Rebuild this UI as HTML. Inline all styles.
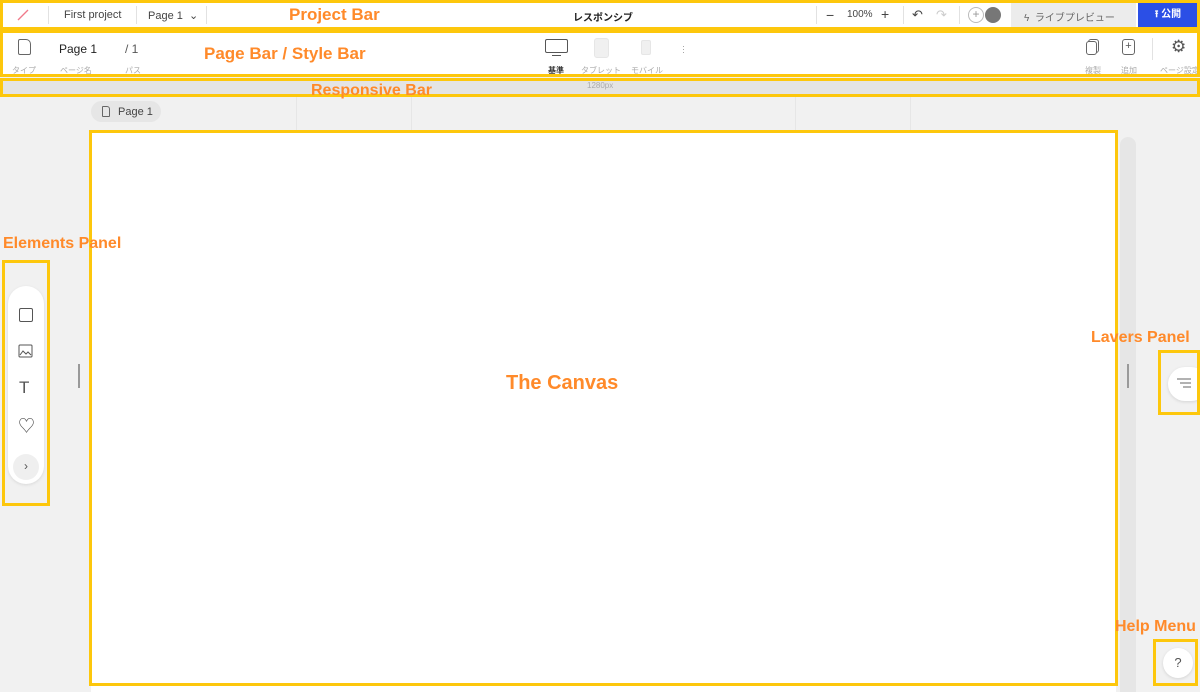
<!DOCTYPE html>
<html><head><meta charset="utf-8"><style>
*{box-sizing:border-box;margin:0;padding:0}
body{width:1200px;height:690px;overflow:hidden;background:#f1f1f1;font-family:"Liberation Sans","Noto Sans CJK JP",sans-serif;position:relative;color:#333}
.a{position:absolute}
.y{position:absolute;border:3px solid #fdc70c}
.lbl{position:absolute;color:#ff8a2a;font-weight:bold;font-size:17px;white-space:nowrap}
.t{font-size:11px;color:#444;white-space:nowrap}
.s{font-size:8px;color:#aaa;white-space:nowrap}
.sep{position:absolute;width:1px;background:#e2e2e2}
</style></head><body>
<!-- project bar -->
<div class="a" style="left:0;top:0;width:1200px;height:30px;background:#fff"></div>
<svg class="a" style="left:16px;top:8px" width="14" height="14"><line x1="2" y1="12" x2="12" y2="2" stroke="#f07a8a" stroke-width="1.3"/></svg>
<div class="sep" style="left:48px;top:6px;height:18px"></div>
<div class="a t" style="left:64px;top:9px">First project</div>
<div class="sep" style="left:136px;top:6px;height:18px"></div>
<div class="a t" style="left:148px;top:9px">Page 1 &nbsp;⌄</div>
<div class="sep" style="left:206px;top:6px;height:18px"></div>
<div class="a t" style="left:573px;top:9px;font-weight:bold;font-size:10px;color:#222">レスポンシブ</div>
<div class="sep" style="left:816px;top:6px;height:18px"></div>
<div class="a t" style="left:826px;top:7px;font-size:14px">−</div>
<div class="a t" style="left:847px;top:9px;font-size:10px">100%</div>
<div class="a t" style="left:881px;top:6px;font-size:14px">+</div>
<div class="sep" style="left:903px;top:6px;height:18px"></div>
<div class="a t" style="left:912px;top:7px;font-size:13px">↶</div>
<div class="a t" style="left:936px;top:7px;font-size:13px;color:#ccc">↷</div>
<div class="sep" style="left:959px;top:6px;height:18px"></div>
<div class="a" style="left:968px;top:7px;width:16px;height:16px;border:1px solid #bbb;border-radius:50%;font-size:12px;line-height:13px;text-align:center;color:#999">+</div>
<div class="a" style="left:985px;top:7px;width:16px;height:16px;border-radius:50%;background:#777"></div>
<div class="a" style="left:1011px;top:3px;width:125px;height:24px;background:#ececec"></div>
<div class="a t" style="left:1024px;top:9px;font-size:10px;color:#666">ϟ &nbsp;ライブプレビュー</div>
<div class="a" style="left:1138px;top:3px;width:60px;height:24px;background:#2b4fe6;color:#fff;font-size:10px;font-weight:bold;text-align:center;line-height:24px">⭱ 公開</div>
<div class="y" style="left:0;top:0;width:1200px;height:30px"></div>
<div class="lbl" style="left:289px;top:5px">Project Bar</div>

<!-- page bar -->
<div class="a" style="left:0;top:31px;width:1200px;height:45px;background:#fff"></div>
<div class="a" style="left:18px;top:39px;width:13px;height:16px;border:1px solid #666;border-radius:2px 5px 2px 2px"></div>
<div class="a s" style="left:12px;top:65px">タイプ</div>
<div class="a t" style="left:59px;top:42px;font-size:12px;color:#222">Page 1</div>
<div class="a s" style="left:60px;top:65px">ページ名</div>
<div class="a t" style="left:125px;top:42px;font-size:12px;color:#555">/ 1</div>
<div class="a s" style="left:125px;top:65px">パス</div>
<div class="a" style="left:545px;top:39px;width:23px;height:14px;border:1px solid #555;border-radius:2px"></div>
<div class="a" style="left:552px;top:55px;width:9px;height:1px;background:#555"></div>
<div class="a s" style="left:548px;top:65px;color:#333;font-weight:bold">基準</div>
<div class="a" style="left:594px;top:38px;width:15px;height:20px;background:#f0f0f0;border:1px solid #e6e6e6;border-radius:3px"></div>
<div class="a s" style="left:581px;top:65px">タブレット</div>
<div class="a" style="left:641px;top:40px;width:10px;height:15px;background:#f0f0f0;border:1px solid #e6e6e6;border-radius:2px"></div>
<div class="a s" style="left:631px;top:65px">モバイル</div>
<div class="a s" style="left:682px;top:45px;color:#999;font-size:9px;line-height:3px">·<br>·<br>·</div>
<div class="a" style="left:1088px;top:39px;width:11px;height:14px;border:1px solid #666;border-radius:3px;background:#fff"></div>
<div class="a" style="left:1086px;top:41px;width:11px;height:14px;border:1px solid #666;border-radius:3px;background:#fff"></div>
<div class="a s" style="left:1085px;top:65px">複製</div>
<div class="a" style="left:1122px;top:39px;width:13px;height:16px;border:1px solid #666;border-radius:3px;font-size:11px;line-height:13px;text-align:center;color:#555">+</div>
<div class="a s" style="left:1121px;top:65px">追加</div>
<div class="sep" style="left:1152px;top:38px;height:22px"></div>
<div class="a" style="left:1171px;top:37px;font-size:17px;color:#555">⚙</div>
<div class="a s" style="left:1160px;top:65px">ページ設定</div>
<div class="y" style="left:0;top:30px;width:1200px;height:47px"></div>
<div class="lbl" style="left:204px;top:44px">Page Bar / Style Bar</div>

<!-- responsive bar -->
<div class="a" style="left:0;top:79px;width:1200px;height:18px;background:#e4e4e4"></div>
<div class="a s" style="left:587px;top:81px;color:#aaa">1280px</div>
<div class="y" style="left:0;top:78px;width:1200px;height:19px"></div>
<div class="lbl" style="left:311px;top:82px;font-size:16px">Responsive Bar</div>

<!-- page tag -->
<div class="a" style="left:91px;top:101px;width:70px;height:21px;background:#e6e6e6;border-radius:11px"></div>
<div class="a" style="left:102px;top:106px;width:8px;height:11px;border:1px solid #666;border-radius:1px 3px 1px 1px"></div>
<div class="a t" style="left:118px;top:106px;font-size:11px">Page 1</div>
<div class="sep" style="left:296px;top:97px;height:34px;background:#e6e6e6"></div>
<div class="sep" style="left:411px;top:97px;height:34px;background:#e6e6e6"></div>
<div class="sep" style="left:795px;top:97px;height:34px;background:#e6e6e6"></div>
<div class="sep" style="left:910px;top:97px;height:34px;background:#e6e6e6"></div>

<!-- canvas -->
<div class="a" style="left:91px;top:132px;width:1025px;height:560px;background:#fff"></div>
<div class="a" style="left:1120px;top:137px;width:16px;height:555px;background:#e6e6e6;border-radius:8px 8px 0 0"></div>
<div class="y" style="left:89px;top:130px;width:1029px;height:556px"></div>
<div class="lbl" style="left:506px;top:372px;font-size:20px">The Canvas</div>
<div class="a" style="left:78px;top:364px;width:2px;height:24px;background:#999"></div>
<div class="a" style="left:1127px;top:364px;width:2px;height:24px;background:#999"></div>

<!-- elements panel -->
<div class="a" style="left:8px;top:286px;width:36px;height:198px;background:#fff;border-radius:18px;box-shadow:0 1px 3px rgba(0,0,0,.1)"></div>
<div class="a" style="left:19px;top:308px;width:14px;height:14px;border:1.3px solid #555;border-radius:2px"></div>
<svg class="a" style="left:18px;top:343px" width="16" height="16"><rect x="1" y="2" width="13" height="12" rx="1" fill="none" stroke="#555"/><path d="M2 12 L5 8 L8 11 L10 9 L13 12" fill="none" stroke="#555"/></svg>
<div class="a" style="left:19px;top:378px;font-size:17px;color:#555">T</div>
<div class="a" style="left:18px;top:412px;font-size:17px;color:#555">♡</div>
<div class="a" style="left:13px;top:454px;width:26px;height:26px;border-radius:50%;background:#efefef;text-align:center;line-height:25px;font-size:12px;color:#555">›</div>
<div class="y" style="left:2px;top:260px;width:48px;height:246px"></div>
<div class="lbl" style="left:3px;top:235px;font-size:16px">Elements Panel</div>

<!-- layers -->
<div class="a" style="left:1168px;top:367px;width:40px;height:34px;background:#fff;border-radius:17px;box-shadow:0 1px 3px rgba(0,0,0,.12)"></div>
<svg class="a" style="left:1176px;top:378px" width="16" height="12"><path d="M1 1H15M4 5H15M7 9H15" stroke="#666" stroke-width="1"/></svg>
<div class="y" style="left:1158px;top:350px;width:42px;height:65px"></div>
<div class="lbl" style="left:1091px;top:329px;font-size:16px">Lavers Panel</div>

<!-- help -->
<div class="a" style="left:1163px;top:648px;width:30px;height:30px;border-radius:50%;background:#fff;box-shadow:0 1px 3px rgba(0,0,0,.12);text-align:center;line-height:30px;font-size:13px;color:#555">?</div>
<div class="y" style="left:1153px;top:639px;width:45px;height:47px"></div>
<div class="lbl" style="left:1115px;top:618px;font-size:16px">Help Menu</div>
</body></html>
